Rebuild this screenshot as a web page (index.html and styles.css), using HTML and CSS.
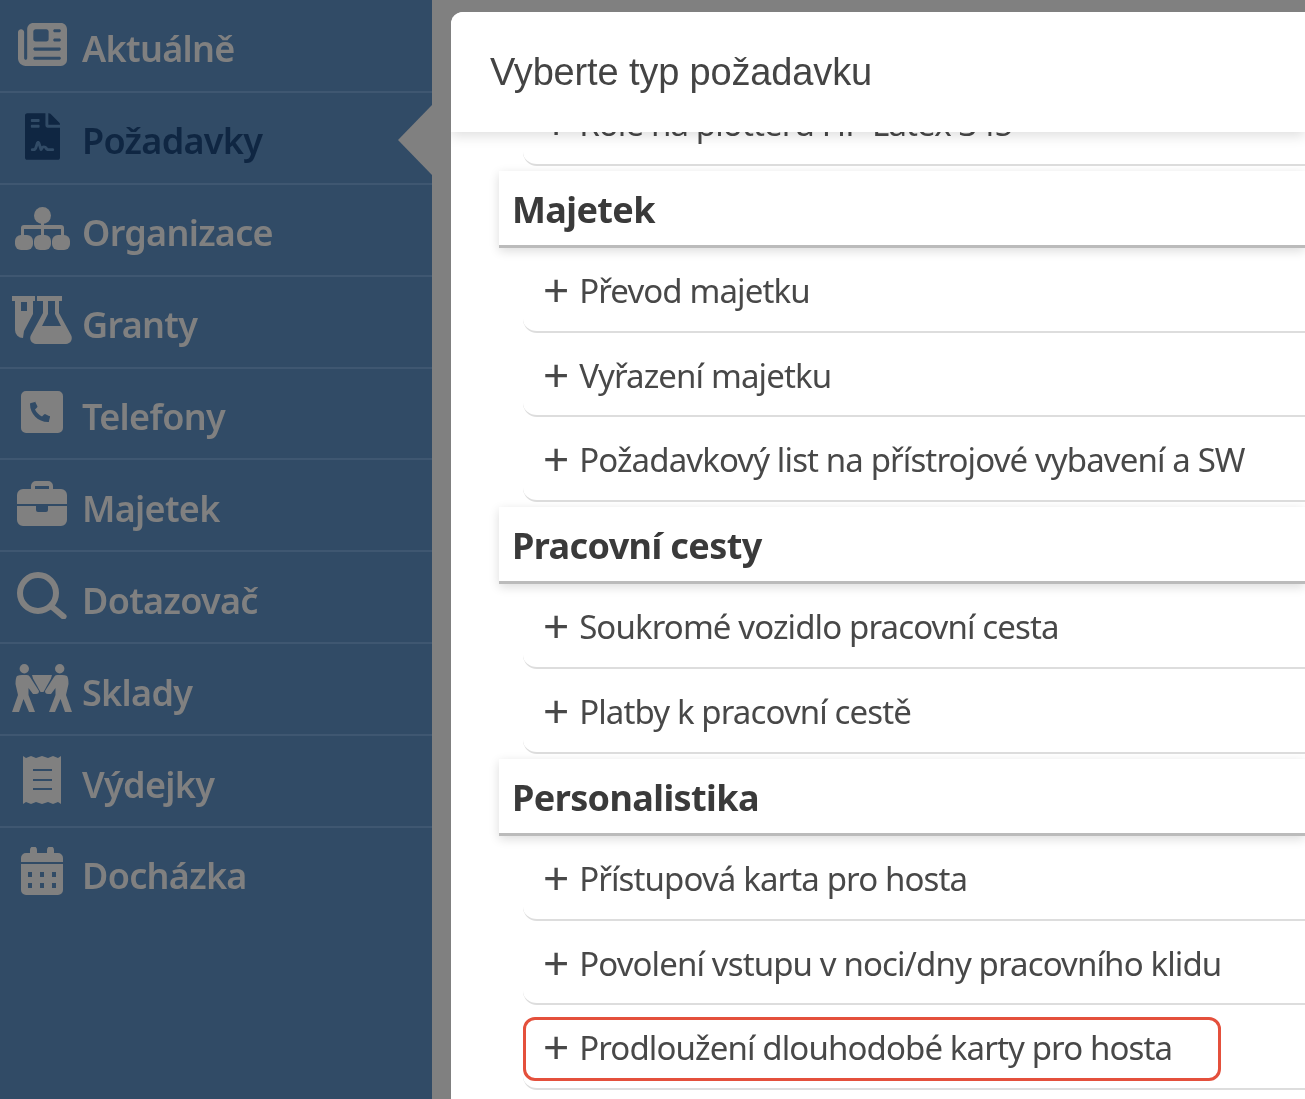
FILE: index.html
```html
<!DOCTYPE html>
<html lang="cs">
<head>
    <meta charset="UTF-8">
    <meta name="viewport" content="width=device-width, initial-scale=1.0">
    <title>Vyberte typ požadavku</title>
    <link rel="stylesheet" href="styles.css">
</head>
<body>
    <nav class="sidebar">
        <a class="nav-item">
            <span class="nav-icon"><svg width="49" height="43" viewBox="0 0 512 448"><path d="M96 64c0-35.300 28.700-64 64-64h288c35.300 0 64 28.700 64 64v320c0 35.300-28.700 64-64 64H80c-44.200 0-80-35.800-80-80V96c0-17.700 14.300-32 32-32s32 14.300 32 32v272c0 8.800 7.200 16 16 16s16-7.200 16-16V64zm64 24v80c0 13.300 10.700 24 24 24h112c13.300 0 24-10.700 24-24V88c0-13.300-10.700-24-24-24H184c-13.300 0-24 10.700-24 24zm208-8c0 8.800 7.200 16 16 16h48c8.800 0 16-7.200 16-16s-7.200-16-16-16h-48c-8.800 0-16 7.200-16 16zm0 96c0 8.800 7.200 16 16 16h48c8.800 0 16-7.200 16-16s-7.200-16-16-16h-48c-8.800 0-16 7.200-16 16zM160 272c0 8.800 7.200 16 16 16h256c8.800 0 16-7.200 16-16s-7.200-16-16-16H176c-8.800 0-16 7.200-16 16zm0 96c0 8.800 7.200 16 16 16h256c8.800 0 16-7.200 16-16s-7.200-16-16-16H176c-8.800 0-16 7.200-16 16z"/></svg></span>
            <span class="nav-label">Aktuálně</span>
        </a>
        <a class="nav-item active">
            <span class="nav-icon"><svg width="35" height="47" viewBox="0 0 384 512"><path d="M224 136V0H24C10.700 0 0 10.700 0 24v464c0 13.300 10.700 24 24 24h336c13.300 0 24-10.700 24-24V160H248c-13.200 0-24-10.800-24-24zM64 72c0-4.420 3.580-8 8-8h80c4.420 0 8 3.580 8 8v16c0 4.420-3.580 8-8 8H72c-4.420 0-8-3.580-8-8V72zm0 64c0-4.420 3.580-8 8-8h80c4.420 0 8 3.580 8 8v16c0 4.420-3.580 8-8 8H72c-4.420 0-8-3.580-8-8v-16zm192.810 248H304c8.840 0 16 7.160 16 16s-7.160 16-16 16h-47.190c-16.450 0-31.270-9.140-38.640-23.860-2.950-5.920-8.090-6.520-10.170-6.520s-7.220.59-10.020 6.190l-7.670 15.340a15.986 15.986 0 0 1-14.310 8.840c-.38 0-.75-.02-1.140-.05-6.450-.45-12-4.750-14.030-10.890L144 354.590l-10.610 31.880c-5.890 17.660-22.380 29.530-41 29.530H80c-8.840 0-16-7.160-16-16s7.160-16 16-16h12.390c4.830 0 9.110-3.080 10.640-7.660l18.190-54.640c3.300-9.810 12.440-16.410 22.780-16.410s19.480 6.590 22.770 16.410l13.880 41.640c19.770-16.190 54.050-9.700 66 14.160 2.020 4.060 5.950 6.490 10.160 6.490zM377 105L279.100 7c-4.500-4.500-10.600-7-17-7H256v128h128v-6.100c0-6.300-2.500-12.400-7-16.900z"/></svg></span>
            <span class="nav-label">Požadavky</span>
        </a>
        <a class="nav-item">
            <span class="nav-icon"><svg width="55" height="43" viewBox="0 0 55 43"><circle cx="27.500" cy="8.500" r="8.500"/><path d="M26 15h3v3h17a3 3 0 0 1 3 3v9h-3v-8H29v8h-3v-8H9v8H6v-9a3 3 0 0 1 3-3h17z"/><rect y="28" width="18" height="15" rx="6"/><rect x="19" y="28" width="17" height="15" rx="6"/><rect x="37" y="28" width="18" height="15" rx="6"/></svg></span>
            <span class="nav-label">Organizace</span>
        </a>
        <a class="nav-item">
            <span class="nav-icon"><svg width="60" height="48" viewBox="0 0 60 48"><path fill-rule="evenodd" d="M0 0h23v5h-2v13l-9 17-1 7a8 8 0 0 1-8-8V5H0zM9 6v9h6V6z"/><path fill-rule="evenodd" d="M25 0h25v5h-3v12l12 22a6 6 0 0 1-5 9H24a6 6 0 0 1-5-9l12-22V5h-6zM36 5v13l-6 12h19l-6-12V5z"/></svg></span>
            <span class="nav-label">Granty</span>
        </a>
        <a class="nav-item">
            <span class="nav-icon"><svg width="42" height="42" viewBox="0 0 42 42"><path fill-rule="evenodd" d="M5 0h32a5 5 0 0 1 5 5v32a5 5 0 0 1-5 5H5a5 5 0 0 1-5-5V5a5 5 0 0 1 5-5zM14 11l-4 1c-1 0-1 1-1 1 0 10 8 18 18 18 1 0 1 0 1-1l1-4c0-1 0-1-1-1l-4-2-1 .500-2 2c-3-1.500-5.500-4-7-7l2-2 .500-1-2-4c0-1-.500-1-.500-1z"/></svg></span>
            <span class="nav-label">Telefony</span>
        </a>
        <a class="nav-item">
            <span class="nav-icon"><svg width="50" height="45" viewBox="0 0 50 45"><path fill-rule="evenodd" d="M14 8V5a5 5 0 0 1 5-5h12a5 5 0 0 1 5 5v3h8a6 6 0 0 1 6 6v9H0v-9a6 6 0 0 1 6-6zM18 5v3h14V5z"/><path d="M0 25h19v4a2 2 0 0 0 2 2h8a2 2 0 0 0 2-2v-4h19v14a6 6 0 0 1-6 6H6a6 6 0 0 1-6-6z"/></svg></span>
            <span class="nav-label">Majetek</span>
        </a>
        <a class="nav-item">
            <span class="nav-icon"><svg class="outline" width="50" height="47" viewBox="0 0 50 47"><circle cx="21" cy="21" r="18" stroke-width="6"/><path d="M34 34l12.500 10.500" stroke-width="6" stroke-linecap="round"/></svg></span>
            <span class="nav-label">Dotazovač</span>
        </a>
        <a class="nav-item">
            <span class="nav-icon"><svg width="60" height="48" viewBox="0 0 60 48"><circle cx="12.300" cy="4.700" r="4.700"/><circle cx="47.700" cy="4.700" r="4.700"/><path d="M20 11h20l-1 3.500-7.500 13.500h-3L21 14.500z"/><path d="M5 12q2-1 5-1h5q2 0 3 2l9 14q0 3-3 3h-3l-4.500-6v7L23 48h-6l-5.500-13L7 48H0l6-17-2.500-11q0-6 1.500-8z"/><path d="M55 12q-2-1-5-1h-5q-2 0-3 2l-9 14q0 3 3 3h3l4.500-6v7L37 48h6l5.500-13L53 48h7l-6-17 2.500-11q0-6-1.500-8z"/></svg></span>
            <span class="nav-label">Sklady</span>
        </a>
        <a class="nav-item">
            <span class="nav-icon"><svg width="38" height="48" viewBox="0 0 38 48"><path fill-rule="evenodd" d="M0 0l3 2 5-2 5 2 6-2 6 2 5-2 5 2 3-2v48l-3-2-5 2-5-2-6 2-6-2-5 2-5-2-3 2zM10 13v2h19v-2zM10 23v2h19v-2zM10 32v2h19v-2z"/></svg></span>
            <span class="nav-label">Výdejky</span>
        </a>
        <a class="nav-item">
            <span class="nav-icon"><svg width="42" height="48" viewBox="0 0 42 48"><path fill-rule="evenodd" d="M9 3a3 3 0 0 1 7 0v3h10V3a3 3 0 0 1 7 0v3h4a5 5 0 0 1 5 5v4H0v-4a5 5 0 0 1 5-5h4zM0 17h42v26a5 5 0 0 1-5 5H5a5 5 0 0 1-5-5zM7 25v5h4v-5zM19 25v5h4v-5zM31 25v5h4v-5zM7 36v5h4v-5zM19 36v5h4v-5zM31 36v5h4v-5z"/></svg></span>
            <span class="nav-label">Docházka</span>
        </a>
    </nav>
    <main class="overlay">
        <div class="modal">
            <h1 class="modal-title">Vyberte typ požadavku</h1>
            <div class="modal-body">
                <ul class="request-list">
                    <li class="request-item"><span class="plus">+</span> Role na plotteru HP Latex 345</li>
                    <li class="request-group">Majetek</li>
                    <li class="request-item"><span class="plus">+</span> Převod majetku</li>
                    <li class="request-item"><span class="plus">+</span> Vyřazení majetku</li>
                    <li class="request-item"><span class="plus">+</span> Požadavkový list na přístrojové vybavení a SW</li>
                    <li class="request-group">Pracovní cesty</li>
                    <li class="request-item"><span class="plus">+</span> Soukromé vozidlo pracovní cesta</li>
                    <li class="request-item"><span class="plus">+</span> Platby k pracovní cestě</li>
                    <li class="request-group">Personalistika</li>
                    <li class="request-item"><span class="plus">+</span> Přístupová karta pro hosta</li>
                    <li class="request-item"><span class="plus">+</span> Povolení vstupu v noci/dny pracovního klidu</li>
                    <li class="request-item marked"><span class="plus">+</span> Prodloužení dlouhodobé karty pro hosta</li>
                </ul>
            </div>
        </div>
    </main>
</body>
</html>
```

FILE: styles.css
```css
html, body {
    height: 100%;
}
body {
    margin: 0;
    display: flex;
    overflow: hidden;
    font-family: "Noto Sans", sans-serif;
    background-color: #808080;
    /* the screenshot is an enlarged capture, everything is a bit soft */
    filter: blur(0.5px);
}
.sidebar {
    width: 432px;
    flex: none;
    box-sizing: border-box;
    padding-top: 1px;
    background-color: #314b66;
}
.nav-item {
    display: flex;
    align-items: center;
    position: relative;
    height: 89.9px;
    border-bottom: 2px solid #3f5771;
    color: #808080;
    font-size: 36px;
    font-weight: 600;
    letter-spacing: -0.7px;
}
.nav-item:last-child {
    border-bottom: 0;
}
.nav-icon {
    display: flex;
    justify-content: center;
    flex: none;
    width: 60px;
    margin: 0 10px 3px 12px;
    fill: currentColor;
}
.nav-icon .outline {
    fill: none;
    stroke: currentColor;
}
.nav-label {
    margin-top: 6px;
}
.nav-item.active {
    color: #0f2642;
}
.nav-item.active::after {
    content: "";
    position: absolute;
    right: 0;
    top: 12px;
    border-style: solid;
    border-width: 35px 34px 35px 0;
    border-color: transparent #808080 transparent transparent;
}
.overlay {
    flex: 1;
    min-width: 0;
    padding: 12px 0 0 19px;
}
.modal {
    height: 100%;
    background-color: #fff;
    border-radius: 12px 0 0 0;
    overflow: hidden;
}
.modal-title {
    position: relative;
    z-index: 1;
    margin: 0;
    height: 120px;
    box-sizing: border-box;
    padding: 37px 0 0 39px;
    background-color: #fff;
    box-shadow: 0 4px 12px rgba(0, 0, 0, 0.13);
    font-family: "Liberation Sans", sans-serif;
    font-size: 38px;
    font-weight: 400;
    line-height: 46px;
    letter-spacing: -0.15px;
    color: #444;
}
.modal-body {
    padding-left: 48px;
}
.request-list {
    list-style-type: none;
    margin: -51px 0 0;
    padding: 0;
}
.request-group {
    position: relative;
    height: 74.5px;
    margin-top: 5px;
    padding-left: 13px;
    line-height: 77px;
    font-size: 36px;
    font-weight: 700;
    letter-spacing: -0.6px;
    color: #3a3a3a;
    background-color: #fff;
    border-bottom: 3px solid #bbb;
    box-shadow: 0 3px 10px rgba(0, 0, 0, 0.14);
}
.request-item {
    position: relative;
    height: 82.6px;
    margin-left: 24px;
    padding-left: 20px;
    line-height: 82px;
    font-size: 33px;
    letter-spacing: -0.88px;
    color: #484848;
    border-bottom: 2px solid #ddd;
    border-radius: 0 0 0 14px;
}
.plus {
    margin-right: 3px;
    font-size: 46px;
    vertical-align: -4px;
}
.request-item.marked::after {
    content: "";
    position: absolute;
    left: 0;
    top: 12px;
    width: 692px;
    height: 58px;
    border: 3px solid #e4503c;
    border-radius: 12px;
}
```
